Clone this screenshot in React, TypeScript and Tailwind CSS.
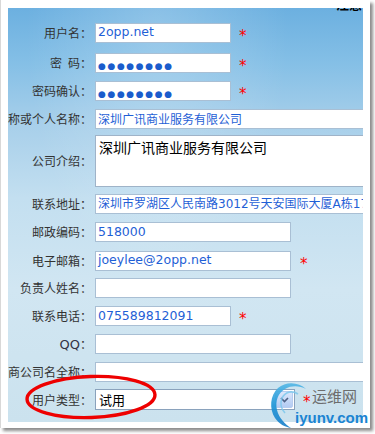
import React from "react";

const cjk = { fontFamily: '"Noto Sans CJK SC", sans-serif' };
const mixed = { fontFamily: '"DejaVu Sans", "Noto Sans CJK SC", sans-serif' };

function Star({ className = "" }: { className?: string }) {
  return (
    <span
      className={"text-[#ff0000] text-[15px] leading-none translate-y-[3px] " + className}
      style={{ fontFamily: '"DejaVu Sans", sans-serif' }}
    >
      *
    </span>
  );
}

function Label({ children }: { children: React.ReactNode }) {
  return (
    <div
      className="w-[84px] shrink-0 flex justify-end items-center text-[12px] leading-none text-[#333] whitespace-nowrap"
      style={cjk}
    >
      {children}
    </div>
  );
}

function Box({
  w,
  children,
  dark = false,
}: {
  w: string;
  children?: React.ReactNode;
  dark?: boolean;
}) {
  return (
    <div
      className={
        w +
        " shrink-0 h-[20px] bg-white border border-[#a9bfd4] flex items-center pl-[2px] whitespace-nowrap overflow-hidden text-[12.5px] leading-none " +
        (dark ? "text-black" : "text-[#1f5fd6]")
      }
      style={mixed}
    >
      {children}
    </div>
  );
}

function Dots() {
  return (
    <span
      className="text-[#1a5ccc] text-[9px] tracking-[1.6px] translate-y-[3px] leading-none"
      style={{ fontFamily: '"DejaVu Sans", sans-serif' }}
    >
      ●●●●●●●●
    </span>
  );
}

function Row({ mt, children }: { mt: string; children: React.ReactNode }) {
  return <div className={"flex items-center gap-[3px] " + mt}>{children}</div>;
}

export default function App() {
  return (
    <div className="w-[375px] h-[434px] bg-white relative overflow-hidden">
      <div className="w-[370px] h-[428px] bg-white border-l border-[#d8d8d8] shadow-[3px_3px_3px_rgba(0,0,0,0.45)] pt-[8px] pl-[7px] relative">
        <div className="w-[355px] h-[414px] relative overflow-hidden bg-[radial-gradient(ellipse_at_42%_6%,rgba(255,255,255,0.22),transparent_45%),linear-gradient(180deg,#6cb0e0_0%,#84bfe6_13%,#a7cfea_28%,#c3dff0_46%,#d1e6f2_68%,#cbe2ee_100%)]">
          {/* clipped heading at top right */}
          <span
            className="absolute right-[1px] top-[-11px] text-[13px] font-bold text-black leading-none"
            style={cjk}
          >
            注意
          </span>

          <div className="flex flex-col pt-[15px]">
            <Row mt="mt-0">
              <Label>用户名：</Label>
              <Box w="w-[136px]">
                <span className="-translate-y-[1px]">2opp.net</span>
              </Box>
              <Star className="ml-[5px]" />
            </Row>

            <Row mt="mt-[10px]">
              <Label>密{"\u2002"}码：</Label>
              <Box w="w-[136px]">
                <Dots />
              </Box>
              <Star className="ml-[5px]" />
            </Row>

            <Row mt="mt-[8px]">
              <Label>密码确认：</Label>
              <Box w="w-[136px]">
                <Dots />
              </Box>
              <Star className="ml-[5px]" />
            </Row>

            <Row mt="mt-[8px]">
              <Label>称或个人名称：</Label>
              <Box w="w-[300px]">
                <span className="text-[12px]" style={cjk}>
                  深圳广讯商业服务有限公司
                </span>
              </Box>
            </Row>

            <Row mt="mt-[6px]">
              <Label>公司介绍：</Label>
              <div
                className="w-[300px] h-[52px] shrink-0 bg-white border border-[#9fb3c8] pl-[3px] pt-[4px] text-[14px] leading-[15px] text-black whitespace-nowrap"
                style={cjk}
              >
                深圳广讯商业服务有限公司
              </div>
            </Row>

            <Row mt="mt-[7px]">
              <Label>联系地址：</Label>
              <Box w="w-[300px]">
                <span className="text-[12px]" style={mixed}>
                  深圳市罗湖区人民南路3012号天安国际大厦A栋17层
                </span>
              </Box>
            </Row>

            <Row mt="mt-[8px]">
              <Label>邮政编码：</Label>
              <Box w="w-[196px]">518000</Box>
            </Row>

            <Row mt="mt-[9px]">
              <Label>电子邮箱：</Label>
              <Box w="w-[196px]">
                <span className="-translate-y-[1px]">joeylee@2opp.net</span>
              </Box>
              <Star className="ml-[6px]" />
            </Row>

            <Row mt="mt-[7px]">
              <Label>负责人姓名：</Label>
              <Box w="w-[196px]" />
            </Row>

            <Row mt="mt-[8px]">
              <Label>联系电话：</Label>
              <Box w="w-[136px]">075589812091</Box>
              <Star className="ml-[5px]" />
            </Row>

            <Row mt="mt-[8px]">
              <Label>
                <span
                  className="text-[13px] text-[#334]"
                  style={{ fontFamily: '"DejaVu Sans", sans-serif' }}
                >
                  QQ
                </span>
                ：
              </Label>
              <Box w="w-[196px]" />
            </Row>

            <Row mt="mt-[8px]">
              <Label>商公司名全称：</Label>
              <Box w="w-[300px]" />
            </Row>

            <Row mt="mt-[7px]">
              <Label>用户类型：</Label>
              <div className="w-[200px] h-[21px] shrink-0 bg-white border border-[#8aa2bc] flex items-center justify-between">
                <span className="pl-[3px] text-[13px] leading-none text-black" style={cjk}>
                  试用
                </span>
                <div className="w-[18px] h-[17px] mr-[1px] rounded-[2px] border border-[#b7cdf0] bg-[linear-gradient(180deg,#dbe7fb,#b3cbf2)] flex items-center justify-center">
                  <svg width="9" height="6" viewBox="0 0 9 6">
                    <path d="M1 1 L4.5 4.5 L8 1" fill="none" stroke="#4d6185" strokeWidth="1.6" />
                  </svg>
                </div>
              </div>
              <Star className="ml-[5px]" />
            </Row>
          </div>

          {/* red hand-drawn ellipse */}
          <svg
            className="absolute left-0 top-0 pointer-events-none"
            width="355"
            height="414"
            viewBox="0 0 355 414"
          >
            <ellipse
              cx="83"
              cy="389"
              rx="64"
              ry="20.5"
              fill="none"
              stroke="#ee0000"
              strokeWidth="3.4"
              transform="rotate(-2 83 389)"
            />
          </svg>
        </div>
      </div>

      {/* watermark */}
      <svg
        className="absolute left-[266px] top-[380px] pointer-events-none"
        width="50"
        height="52"
        viewBox="0 0 50 52"
      >
        <defs>
          <linearGradient id="wm" x1="0" y1="0" x2="0" y2="1">
            <stop offset="0" stopColor="#55b8e6" />
            <stop offset="0.5" stopColor="#1f94d6" />
            <stop offset="1" stopColor="#1b7fc9" />
          </linearGradient>
        </defs>
        <path
          d="M40 9 C33 2 20 1 12 8 C4 15 3 29 9 38 C13 44 19 47 25 48 C19 44 13 38 11 30 C9 21 12 13 19 9 C26 5 34 6 40 9 Z"
          fill="url(#wm)"
          opacity="0.92"
        />
        <path
          d="M32 14 C26 10 19 12 16 18 C14 23 15 29 19 33"
          fill="none"
          stroke="#7cc8ec"
          strokeWidth="1.6"
          opacity="0.85"
        />
      </svg>
      <span
        className="absolute left-[312px] top-[388px] text-[15px] leading-none text-[#6d6d6d]"
        style={cjk}
      >
        运维网
      </span>
      <span
        className="absolute left-[295px] top-[410px] text-[15px] leading-none font-bold text-[#1a84d2]"
        style={{ fontFamily: '"Liberation Sans", sans-serif' }}
      >
        iyunv.com
      </span>
    </div>
  );
}
